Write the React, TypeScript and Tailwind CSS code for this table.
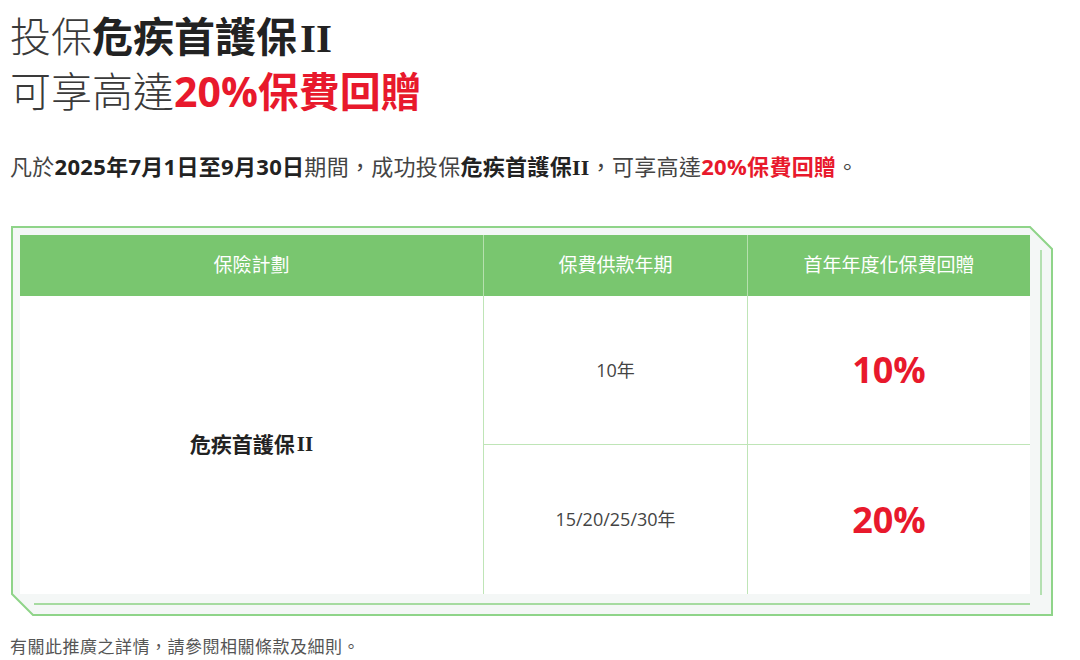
import React from "react";

const cjk = { fontFamily: '"Open Sans", "Noto Sans CJK TC", sans-serif' };
const serifII = { fontFamily: '"Liberation Serif", serif' };

function Frame() {
  return (
    <svg
      className="absolute inset-0 pointer-events-none"
      width={1043}
      height={390}
      viewBox="0 0 1043 390"
    >
      <polygon
        points="1,1 1019,1 1041,23 1041,389 22,389 1,368"
        fill="#f4f7f6"
        stroke="#8fd489"
        strokeWidth={2}
      />
      <line x1={1030} y1={24} x2={1030} y2={369} stroke="#9fd99a" strokeWidth={1.5} />
      <line x1={23} y1={378} x2={1019} y2={378} stroke="#a6dba0" strokeWidth={2} />
    </svg>
  );
}

export default function App() {
  return (
    <div className="w-[1080px] h-[660px] bg-white overflow-hidden" style={cjk}>
      <div className="pl-[10px] pt-[10px] text-[41px] leading-[53px]">
        <div>
          <span className="font-light text-[#3a3a3a]">投保</span>
          <span className="font-bold text-[#222]">危疾首護保</span>
          <span className="font-bold text-[#222] pl-[3px]" style={serifII}>II</span>
        </div>
        <div>
          <span className="font-light text-[#3a3a3a]">可享高達</span>
          <span className="font-bold text-[#e8192c]">20%保費回贈</span>
        </div>
      </div>

      <p className="mt-[33px] pl-[10px] text-[22px] leading-[30px] tracking-[0.3px] text-[#444]">
        凡於<span className="font-bold text-[#222]">2025年7月1日至9月30日</span>期間，成功投保
        <span className="font-bold text-[#222]">危疾首護保</span>
        <span className="font-bold text-[#222]" style={serifII}>II</span>，可享高達
        <span className="font-bold text-[#e8192c]">20%保費回贈</span>。
      </p>

      <div className="relative ml-[11px] mt-[43px] w-[1043px] h-[390px]">
        <Frame />
        <div className="relative pl-[9px] pt-[9px]">
          <div className="grid grid-cols-[464px_264px_282px] grid-rows-[61px_149px_149px] w-[1010px] bg-white">
            <div className="bg-[#79c66f] border-r border-[#b6e0ae] flex items-center justify-center text-white text-[19px]">
              保險計劃
            </div>
            <div className="bg-[#79c66f] border-r border-[#b6e0ae] flex items-center justify-center text-white text-[19px]">
              保費供款年期
            </div>
            <div className="bg-[#79c66f] flex items-center justify-center text-white text-[19px]">
              首年年度化保費回贈
            </div>

            <div className="row-span-2 border-r border-[#bfe5b7] flex items-center justify-center text-[21px] font-bold text-[#222]">
              <span>危疾首護保</span>
              <span className="pl-[2px]" style={serifII}>II</span>
            </div>
            <div className="border-r border-b border-[#bfe5b7] flex items-center justify-center text-[18px] text-[#444]">
              10年
            </div>
            <div className="border-b border-[#bfe5b7] flex items-center justify-center text-[36px] font-bold text-[#e8192c]">
              10%
            </div>
            <div className="border-r border-[#bfe5b7] flex items-center justify-center text-[18px] text-[#444]">
              15/20/25/30年
            </div>
            <div className="flex items-center justify-center text-[36px] font-bold text-[#e8192c]">
              20%
            </div>
          </div>
        </div>
      </div>

      <p className="mt-[19px] pl-[10px] text-[17px] leading-[24px] tracking-[0.5px] text-[#555]">
        有關此推廣之詳情，請參閱相關條款及細則。
      </p>
    </div>
  );
}
